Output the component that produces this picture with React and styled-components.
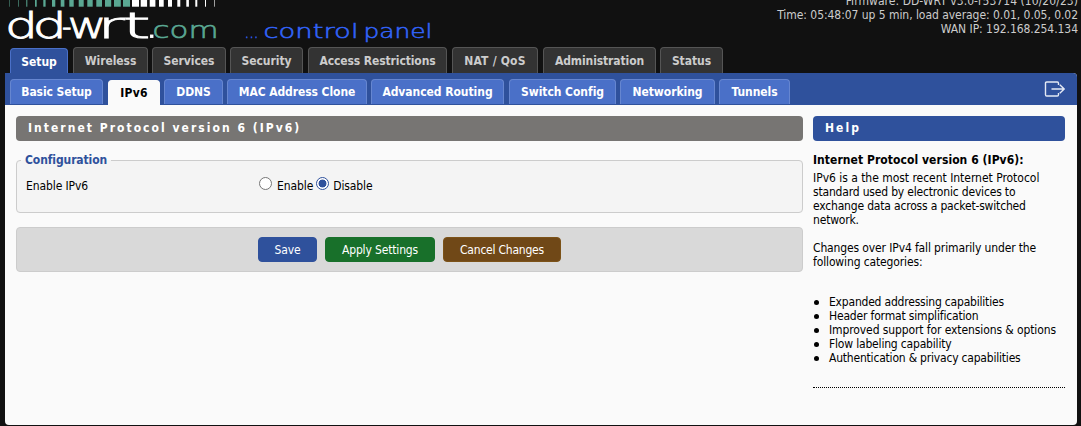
import React from "react";
import styled, { createGlobalStyle } from "styled-components";

const Global = createGlobalStyle`
  * { box-sizing: border-box; }
  body {
    margin: 0;
    background: #111;
    color: #000;
    font: 12px/14px "DejaVu Sans Condensed", Tahoma, sans-serif;
  }
`;

const Page = styled.div`
  width: 1081px;
  height: 426px;
  overflow: hidden;
  padding: 0 4px 1px 5px;
  display: flex;
  flex-direction: column;
`;
const Header = styled.header`
  height: 47px;
  flex: none;
  display: flex;
  justify-content: space-between;
`;
const Logo = styled.svg`
  display: block;
  width: 440px;
  height: 47px;
  flex: none;
  font-family: "DejaVu Sans", sans-serif;
  font-weight: 200;
`;
const Info = styled.div`
  color: #ccc;
  text-align: right;
  margin: -6px -1px 0 0;
  white-space: nowrap;
`;
const Line = styled.div`
  letter-spacing: ${(p) => p.$s ?? -0.05}px;
`;
const MainTabs = styled.nav`
  height: 26px;
  flex: none;
  display: flex;
  padding-left: 5px;
  align-items: flex-end;
`;
const Tab = styled.a`
  height: ${(p) => (p.$on ? 25 : 26)}px;
  width: ${(p) => p.$w}px;
  margin-right: ${(p) => p.$gap ?? 4}px;
  border: 1px solid ${(p) => (p.$on ? "#4a70c8" : "#555")};
  border-bottom: 0;
  border-radius: 4px 4px 0 0;
  background: ${(p) => (p.$on ? "#2f519c" : "#333")};
  color: ${(p) => (p.$on ? "#fff" : "#ccc")};
  font-weight: bold;
  line-height: ${(p) => (p.$on ? 26 : 27)}px;
  letter-spacing: ${(p) => p.$s ?? -0.05}px;
  text-align: center;
  white-space: nowrap;
`;
const SubTab = styled(Tab)`
  height: 25px;
  margin-bottom: ${(p) => (p.$on ? -1 : 0)}px;
  line-height: 25px;
  border-color: ${(p) => (p.$on ? "#fafafa" : "#6686d0")};
  background: ${(p) => (p.$on ? "#fafafa" : "#4a70c8")};
  color: ${(p) => (p.$on ? "#000" : "#fff")};
`;
const Panel = styled.main`
  flex: 1;
  background: #fafafa;
  border-radius: 0 4px 4px 4px;
  overflow: hidden;
`;
const SubBar = styled.nav`
  height: 32px;
  background: #2f519c;
  display: flex;
  align-items: flex-end;
  padding: 0 12px 1px 5px;
`;
const Logout = styled.svg`
  width: 22px;
  height: 18px;
  margin: 0 -1px 6px auto;
  fill: none;
  stroke: #e4e9f4;
  stroke-width: 1.4;
`;
const Body = styled.div`
  display: flex;
  gap: 10px;
  padding: 11px 12px 0 11px;
`;
const Content = styled.section`
  width: 787px;
`;
const Aside = styled.aside`
  width: 252px;
  white-space: nowrap;
`;
const Heading = styled.h2`
  margin: 0;
  height: 25px;
  padding-left: 12px;
  border-radius: 4px;
  background: ${(p) => p.$bg};
  color: #fff;
  font-size: 12px;
  line-height: 25px;
  letter-spacing: 2.03px;
`;
const Fieldset = styled.fieldset`
  margin: 12px 0 0;
  padding: 0 9px;
  height: 60px;
  min-width: 0;
  border: 1px solid #ccc;
  border-radius: 4px;
  background: #f4f4f4;
`;
const Legend = styled.legend`
  margin-left: -5px;
  padding: 0 4px;
  color: #2f519c;
  font-weight: bold;
  line-height: 14px;
  letter-spacing: -0.1px;
`;
const Setting = styled.div`
  display: flex;
  height: 20px;
  margin-top: 9px;
  align-items: center;
  letter-spacing: -0.1px;
`;
const SettingLabel = styled.div`
  width: 233px;
`;
const Option = styled.label`
  display: flex;
  align-items: center;
  margin-right: 3px;
`;
const Radio = styled.input`
  appearance: none;
  width: 13px;
  height: 13px;
  margin: -5px 5px 0 0;
  border: 1px solid #767676;
  border-radius: 50%;
  background: #fff;
  &:checked {
    margin-right: 4px;
    border-color: #2f519c;
    background: radial-gradient(circle, #2f519c 3.6px, #fff 4.3px);
  }
`;
const Actions = styled.div`
  display: flex;
  justify-content: center;
  align-items: center;
  gap: 8px;
  height: 45px;
  margin-top: 14px;
  border: 1px solid #ccc;
  border-radius: 4px;
  background: #d9d9d9;
`;
const Button = styled.button`
  height: 25px;
  width: ${(p) => p.$w}px;
  padding: 0;
  border: 1px solid ${(p) => p.$edge};
  border-radius: 4px;
  background: ${(p) => p.$bg};
  color: #fff;
  font: inherit;
  letter-spacing: ${(p) => p.$s}px;
`;
const HelpTitle = styled.h3`
  margin: 12px 0 4px;
  font-size: 12px;
  line-height: 14px;
  letter-spacing: 0.06px;
`;
const HelpText = styled.div`
  margin: 0 0 14px;
`;
const HelpList = styled.ul`
  list-style: none;
  margin: 26px 0 0;
  padding: 0 0 22px;
  border-bottom: 1px dotted #000;
`;
const HelpItem = styled.li`
  display: flex;
  align-items: center;
  height: 14px;
  letter-spacing: ${(p) => p.$s ?? -0.1}px;
  &::before {
    content: "";
    width: 5px;
    height: 5px;
    margin: 0 10px 0 1px;
    border-radius: 50%;
    background: #000;
  }
`;

const BARS = [
  [9, 0.5], [18, 0.6], [26.3, 1], [35, 1.7], [43.3, 2.3], [52, 3.3], [60.7, 3.7],
  [69.3, 4.4], [78.7, 5], [87.3, 5.4], [96.3, 5.7], [105, 6.2], [114, 6.8], [123, 7],
  [132, 7], [140.7, 6.4], [149.7, 5.7], [159, 4.7], [168, 4], [177.3, 3], [186.3, 2.6],
  [195.3, 2], [205, 1], [214, 0.6],
];

/* wordmark letters: character, x, advance */
const LETTERS = [
  ["d", 5, 33], ["d", 32.5, 34.5], ["-", 62, 9.5], ["w", 67.5, 39], ["r", 97.5, 27], ["t", 122.5, 28],
];

const MAIN = [
  ["Setup", 58, 5], ["Wireless", 75, 4], ["Services", 74, 4], ["Security", 73, 5],
  ["Access Restrictions", 139, 5, -0.1], ["NAT / QoS", 86, 5, 0.2], ["Administration", 113, 4, -0.1], ["Status", 63, 0],
];
const SUB = [
  ["Basic Setup", 93, 5, -0.1], ["IPv6", 52, 4, 0.2], ["DDNS", 59, 4], ["MAC Address Clone", 140, 4, -0.08],
  ["Advanced Routing", 133, 5], ["Switch Config", 107, 4], ["Networking", 95, 4], ["Tunnels", 71, 0],
];

export default function App() {
  return (
    <>
      <Global />
      <Page>
        <Header>
          <Logo viewBox="5 0 440 47">
            {BARS.map(([x, w], i) => (
              <rect key={x} x={x} y="0" width={w} height="6.7" fill={i < 14 ? "#5aa893" : "#fff"} />
            ))}
            <g fill="#fff" stroke="#fff" strokeWidth="0.9" fontSize="36">
              {LETTERS.map(([c, x, w]) => (
                <text key={x} x={x} y="37.7" textLength={w} lengthAdjust="spacingAndGlyphs">{c}</text>
              ))}
              <rect x="150.5" y="35" width="2.5" height="2.5" />
            </g>
            <text x="152.5" y="37.7" fontSize="23" fill="#5aa893" stroke="#5aa893" strokeWidth="0.6" textLength="66" lengthAdjust="spacingAndGlyphs">com</text>
            <g fill="#3264fa" stroke="#3264fa" strokeWidth="0.5" fontSize="19.5">
              <text x="244.5" y="37.7" textLength="14" lengthAdjust="spacingAndGlyphs">...</text>
              <text x="263.5" y="37.7" textLength="95" lengthAdjust="spacingAndGlyphs">control</text>
              <text x="363.5" y="37.7" textLength="69" lengthAdjust="spacingAndGlyphs">panel</text>
            </g>
          </Logo>
          <Info>
            <Line $s={0.05}>Firmware: DD-WRT v3.0-r53714 (10/20/23)</Line>
            <Line>Time: 05:48:07 up 5 min, load average: 0.01, 0.05, 0.02</Line>
            <Line>WAN IP: 192.168.254.134</Line>
          </Info>
        </Header>
        <MainTabs>
          {MAIN.map(([t, w, g, s]) => (
            <Tab key={t} $w={w} $gap={g} $s={s} $on={t === "Setup"}>{t}</Tab>
          ))}
        </MainTabs>
        <Panel>
          <SubBar>
            {SUB.map(([t, w, g, s]) => (
              <SubTab key={t} $w={w} $gap={g} $s={s} $on={t === "IPv6"}>{t}</SubTab>
            ))}
            <Logout viewBox="0 0 22 18">
              <path d="M14.5 5V3.2Q14.5 2 13.3 2H2.7Q1.5 2 1.5 3.2V14.8Q1.5 16 2.7 16H13.3Q14.5 16 14.5 14.8V13M7.5 9H20M15.8 4.8L20.2 9L15.8 13.2" />
            </Logout>
          </SubBar>
          <Body>
            <Content>
              <Heading $bg="#777573">Internet Protocol version 6 (IPv6)</Heading>
              <Fieldset>
                <Legend>Configuration</Legend>
                <Setting>
                  <SettingLabel>Enable IPv6</SettingLabel>
                  <Option><Radio type="radio" name="ipv6" />Enable</Option>
                  <Option><Radio type="radio" name="ipv6" defaultChecked />Disable</Option>
                </Setting>
              </Fieldset>
              <Actions>
                <Button $w={59} $bg="#2f519c" $edge="#2f519c" $s={-0.1}>Save</Button>
                <Button $w={110} $bg="#18702a" $edge="#18702a" $s={-0.15}>Apply Settings</Button>
                <Button $w={118} $bg="#704817" $edge="#7c5218" $s={-0.22}>Cancel Changes</Button>
              </Actions>
            </Content>
            <Aside>
              <Heading $bg="#2f519c">Help</Heading>
              <HelpTitle>Internet Protocol version 6 (IPv6):</HelpTitle>
              <HelpText>
                <Line $s={-0.03}>IPv6 is a the most recent Internet Protocol</Line>
                <Line $s={-0.18}>standard used by electronic devices to</Line>
                <Line $s={-0.18}>exchange data across a packet-switched</Line>
                <Line $s={-0.18}>network.</Line>
              </HelpText>
              <HelpText>
                <Line $s={-0.13}>Changes over IPv4 fall primarily under the</Line>
                <Line $s={-0.13}>following categories:</Line>
              </HelpText>
              <HelpList>
                <HelpItem $s={-0.2}>Expanded addressing capabilities</HelpItem>
                <HelpItem $s={-0.17}>Header format simplification</HelpItem>
                <HelpItem>Improved support for extensions &amp; options</HelpItem>
                <HelpItem $s={-0.18}>Flow labeling capability</HelpItem>
                <HelpItem $s={-0.2}>Authentication &amp; privacy capabilities</HelpItem>
              </HelpList>
            </Aside>
          </Body>
        </Panel>
      </Page>
    </>
  );
}
